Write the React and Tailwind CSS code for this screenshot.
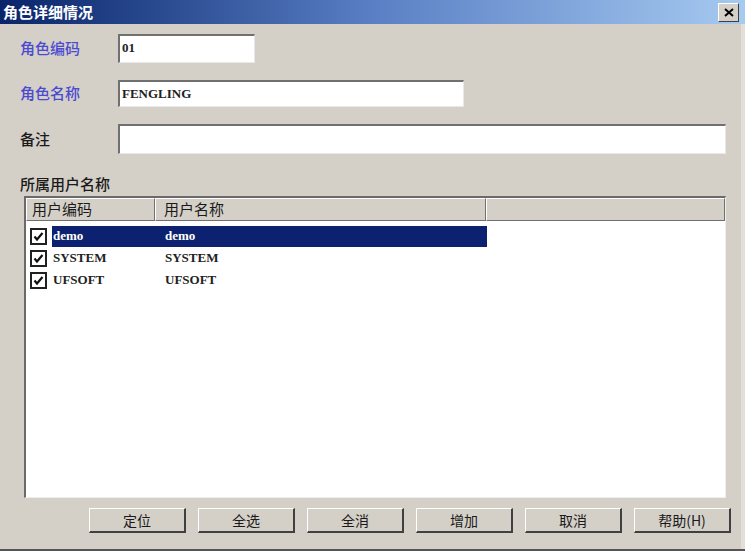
import React from 'react';

const users = [
  { code: 'demo', name: 'demo', selected: true },
  { code: 'SYSTEM', name: 'SYSTEM' },
  { code: 'UFSOFT', name: 'UFSOFT' },
];

const buttons = ['定位', '全选', '全消', '增加', '取消', '帮助(H)'];

const cjk = "font-['Noto_Sans_CJK_SC','Noto_Sans',sans-serif]";
const serif = "font-['Liberation_Serif','Noto_Sans_CJK_SC',serif]";

const CheckBox = () => (
  <div className="w-[17px] h-[17px] border-2 border-[#202020] bg-white flex items-center justify-center shrink-0">
    <svg width="11" height="11" viewBox="0 0 11 11">
      <path d="M1.5 5.5 L4 8.5 L9.5 2" fill="none" stroke="#101010" strokeWidth="2.2" />
    </svg>
  </div>
);

const Field = ({ label, blue, width, height, value }) => (
  <div className="flex items-center">
    <div className={`w-[118px] pl-[20px] text-[15px] font-medium ${cjk} ${blue ? 'text-[#4b4bd0]' : 'text-[#1a1a1a]'}`}>
      {label}
    </div>
    <div
      className={`${width} ${height} bg-white border-t-2 border-l-2 border-t-[#707070] border-l-[#707070] border-b border-r border-b-[#e8e8e8] border-r-[#e8e8e8] pl-[2px] pt-[2px] text-[13px] font-bold text-[#222] ${serif}`}
    >
      {value}
    </div>
  </div>
);

export default function App() {
  return (
    <div className="w-[745px] h-[551px] bg-[#d4d0c8] flex flex-col overflow-hidden border-b-2 border-b-[#555]">
      {/* title bar */}
      <div className="h-[24px] shrink-0 flex items-center justify-between pl-[3px] pr-[6px] bg-gradient-to-r from-[#0a246a] via-[#5a7fc4] to-[#a6caf0]">
        <span className={`text-white font-bold text-[15px] ${cjk}`}>角色详细情况</span>
        <div className="w-[21px] h-[19px] mt-[1px] bg-[#d4d0c8] border border-t-white border-l-white border-b-[#404040] border-r-[#404040] flex items-center justify-center">
          <svg width="10" height="9" viewBox="0 0 10 9">
            <path d="M1 1 L9 8 M9 1 L1 8" stroke="#000" strokeWidth="2" />
          </svg>
        </div>
      </div>

      <div className="flex-1 flex border-r-4 border-r-[#e2dfd8]">
        <div className="flex-1 flex flex-col pt-[10px]">
          <Field label="角色编码" blue width="w-[137px]" height="h-[29px]" value="01" />
          <div className="mt-[17px]">
            <Field label="角色名称" blue width="w-[346px]" height="h-[27px]" value="FENGLING" />
          </div>
          <div className="mt-[17px]">
            <Field label="备注" width="w-[608px]" height="h-[30px]" value="" />
          </div>

          <div className={`pl-[20px] mt-[20px] text-[15px] font-medium leading-[20px] text-[#1a1a1a] ${cjk}`}>所属用户名称</div>

          {/* list */}
          <div className="ml-[24px] mt-[2px] w-[702px] h-[302px] bg-white border-t-2 border-l-2 border-t-[#6a6a6a] border-l-[#6a6a6a] border-b border-r border-b-[#eeeeee] border-r-[#eeeeee] flex flex-col">
            <div className={`h-[23px] flex bg-[#d4d0c8] text-[15px] text-[#1a1a1a] ${cjk}`}>
              <div className="w-[129px] border border-t-white border-l-white border-b-[#707070] border-r-[#707070] pl-[5px] leading-[20px]">用户编码</div>
              <div className="w-[331px] border border-t-white border-l-white border-b-[#707070] border-r-[#707070] pl-[8px] leading-[20px]">用户名称</div>
              <div className="flex-1 border border-t-white border-l-white border-b-[#707070] border-r-[#707070]"></div>
            </div>
            <div className="pt-[4px] flex flex-col">
              {users.map((u) => (
                <div key={u.code} className="h-[22px] flex items-center">
                  <div className="w-[26px] pl-[4px] flex items-center">
                    <CheckBox />
                  </div>
                  <div
                    className={`h-[21px] w-[435px] flex items-center text-[13px] font-semibold ${serif} ${u.selected ? 'bg-[#0c2270] text-white' : 'text-[#222]'}`}
                  >
                    <span className="w-[113px] pl-[1px]">{u.code}</span>
                    <span>{u.name}</span>
                  </div>
                </div>
              ))}
            </div>
          </div>

          {/* buttons */}
          <div className="flex gap-[12px] pl-[89px] mt-[10px]">
            {buttons.map((b) => (
              <div
                key={b}
                className={`w-[97px] h-[25px] bg-[#d4d0c8] border-t border-l border-t-white border-l-white border-b-2 border-r-2 border-b-[#404040] border-r-[#404040] flex items-center justify-center text-[14px] text-[#1a1a1a] ${cjk}`}
              >
                {b}
              </div>
            ))}
          </div>
        </div>
      </div>
    </div>
  );
}
